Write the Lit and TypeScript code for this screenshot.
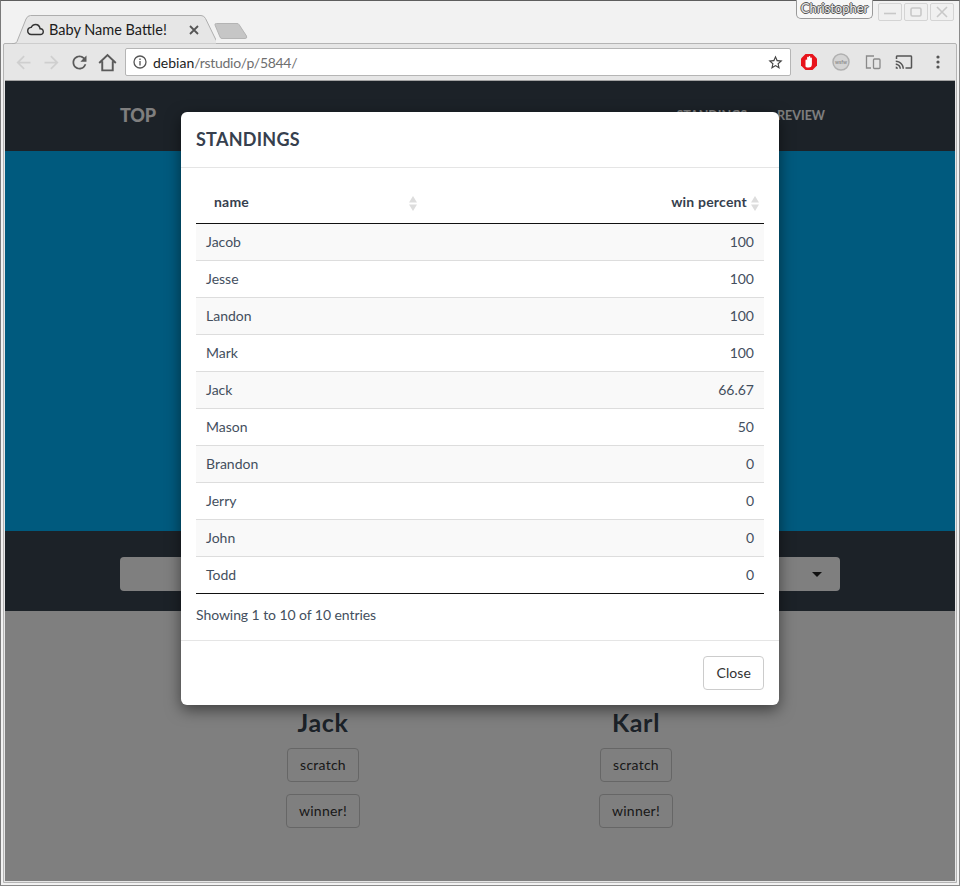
import { LitElement, html, css, svg } from "lit";
import { customElement } from "lit/decorators.js";

const rows: [string, string][] = [
  ["Jacob", "100"], ["Jesse", "100"], ["Landon", "100"], ["Mark", "100"], ["Jack", "66.67"],
  ["Mason", "50"], ["Brandon", "0"], ["Jerry", "0"], ["John", "0"], ["Todd", "0"],
];

const icon = (cls: string, d: string, vb = "0 0 24 24") =>
  html`<svg class=${cls} viewBox=${vb}>${svg`<path d=${d}></path>`}</svg>`;

const ARROW = "M20 11H7.83l5.59-5.59L12 4l-8 8 8 8 1.41-1.41L7.83 13H20v-2z";
const RELOAD = "M17.65 6.35A7.958 7.958 0 0 0 12 4c-4.42 0-7.99 3.58-7.99 8s3.57 8 7.99 8c3.73 0 6.84-2.55 7.73-6h-2.08A5.99 5.99 0 0 1 12 18c-3.31 0-6-2.69-6-6s2.69-6 6-6c1.66 0 3.14.69 4.22 1.78L13 11h7V4l-2.35 2.35z";
const STAR = "M22 9.24l-7.19-.62L12 2 9.19 8.63 2 9.24l5.46 4.73L5.82 21 12 17.27 18.18 21l-1.63-7.03L22 9.24zM12 15.4l-3.76 2.27 1-4.28-3.32-2.88 4.38-.38L12 6.1l1.71 4.04 4.38.38-3.32 2.88 1 4.28L12 15.4z";
const CAST = "M21 3H3c-1.1 0-2 .9-2 2v3h2V5h18v14h-7v2h7c1.1 0 2-.9 2-2V5c0-1.1-.9-2-2-2zM1 18v3h3c0-1.66-1.34-3-3-3zm0-4v2c2.76 0 5 2.24 5 5h2c0-3.87-3.13-7-7-7zm0-4v2c4.97 0 9 4.03 9 9h2c0-6.08-4.93-11-11-11z";
const CLOUD = "M19.35 10.04A7.49 7.49 0 0 0 12 4C9.11 4 6.6 5.64 5.35 8.04A5.994 5.994 0 0 0 0 14c0 3.31 2.69 6 6 6h13c2.76 0 5-2.24 5-5 0-2.64-2.05-4.78-4.65-4.96zM19 18H6c-2.21 0-4-1.79-4-4s1.79-4 4-4h.71C7.37 7.69 9.48 6 12 6c3.04 0 5.5 2.46 5.5 5.5v.5H19c1.66 0 3 1.34 3 3s-1.34 3-3 3z";

const sortIcon = html`<svg class="sort" viewBox="0 0 10 15"><path d="M5 0l4 6.5H1z"></path><path d="M5 15l-4-6.5h8z"></path></svg>`;

@customElement("app-root")
export class AppRoot extends LitElement {
  static styles = css`
    :host { display: block; width: 960px; height: 886px; font-family: "Lato", "Liberation Sans", sans-serif; }
    * { box-sizing: border-box; }
    .window { width: 960px; height: 886px; display: flex; flex-direction: column; background: #f2f2f2;
      border: 1px solid #8a8a8a; border-top-color: #5e5e5e; border-left-color: #7a7a7a; }

    .titlebar { height: 42px; position: relative; display: flex; flex: none; }
    .tab { position: relative; width: 204px; height: 29px; margin: 13px 0 0 11px; display: flex; align-items: center; z-index: 1; flex: none; }
    .tab-shape { position: absolute; left: 0; top: 0; width: 204px; height: 30px; }
    .tab-content { position: relative; display: flex; align-items: center; height: 27px; padding: 2px 0 0 15px; }
    .cloud { width: 17px; height: 17px; fill: #333; }
    .tab-title { margin-left: 5px; font-size: 14.5px; color: #1c1c1c; white-space: nowrap; width: 128px; }
    .tab-x { width: 10px; height: 10px; margin-left: 12px; stroke: #555; stroke-width: 1.8; fill: none; }
    .newtab { width: 36px; height: 18px; margin: 21px 0 0 -3px; flex: none; }
    .win-area { margin-left: auto; display: flex; align-items: flex-start; padding-right: 3px; }
    .user { width: 77px; height: 19px; margin-top: -1px; margin-right: 5px; border: 1px solid #9a9a9a; border-top: none; border-radius: 0 0 5px 5px;
      background: #f7f7f7; font-size: 13px; font-family: "Lato", sans-serif; text-align: center; line-height: 17px; color: #e8e8e8;
      text-shadow: -1px 0 #555, 1px 0 #555, 0 -1px #555, 0 1px #555; }
    .winbtn { width: 24px; height: 18px; margin: 2px 2px 0 0; border: 1px solid #d4d4d4; border-radius: 2px; background: #f0f0f0;
      display: flex; align-items: center; justify-content: center; }
    .winbtn svg { width: 14px; height: 12px; fill: none; stroke: #c8c8c8; stroke-width: 1.6; }

    .frame { flex: 1; margin: 0 2px 2px; padding: 0 1px 1px; border: 1px solid #b4b4b4; border-radius: 2px 2px 0 0; background: #e6e6e6;
      display: flex; flex-direction: column; min-height: 0; }
    .toolbar { height: 37px; flex: none; border-bottom: 1px solid #a4a4a4; display: flex; align-items: center; padding-left: 7.5px; }
    .nav-ico { width: 21px; height: 21px; margin-right: 7px; fill: #5a5a5a; flex: none; }
    .nav-ico.off { fill: #cfcfcf; }
    .flip { transform: scaleX(-1); }
    .home { width: 21px; height: 21px; fill: none; stroke: #5a5a5a; stroke-width: 2.2; flex: none; }
    .omni { width: 666px; height: 28px; margin-left: 7.5px; background: #fff; border: 1px solid #b5b5b5; border-radius: 2px; display: flex; align-items: center; padding: 0 6px 0 7px; flex: none; }
    .info { width: 14px; height: 14px; fill: none; stroke: #555; stroke-width: 1.3; flex: none; }
    .url { margin-left: 6px; font-size: 14px; color: #6f6f6f; flex: 1; white-space: nowrap; letter-spacing: -.3px; }
    .url b { font-weight: 400; color: #1c1c1c; letter-spacing: 0; }
    .star { width: 17px; height: 17px; fill: #444; flex: none; }
    .ext { flex: none; }
    .opera { width: 18px; height: 18px; margin-left: 9px; }
    .wsfw { width: 18px; height: 18px; margin-left: 14px; }
    .device { width: 16px; height: 16px; margin-left: 15px; fill: none; stroke: #8a8a8a; stroke-width: 1.3; }
    .cast { width: 18px; height: 18px; margin-left: 14px; fill: #555; }
    .dots { width: 4px; height: 14px; margin-left: 23px; fill: #555; }

    .page { position: relative; flex: 1; background: #fff; display: flex; flex-direction: column; overflow: hidden; }
    .topnav { height: 70px; flex: none; background: #384450; display: flex; align-items: center; padding: 0 130px 2px 115px; color: #fff; font-weight: 700; }
    .brand { font-size: 18px; font-weight: 900; letter-spacing: -.2px; }
    .links { margin-left: auto; display: flex; gap: 30px; font-size: 12.5px; }
    .hero { height: 380px; flex: none; background: #00b4fc; }
    .selectbar { height: 80px; flex: none; background: #384450; padding: 26px 115px 0; }
    .select { height: 34px; background: #fff; border-radius: 4px; display: flex; align-items: center; justify-content: flex-end; padding-right: 18px; }
    .caret { width: 0; height: 0; border: 5px solid transparent; border-top-color: #222; border-bottom: 0; }
    .battle { flex: 1; display: grid; grid-template-columns: 313px 313px; padding: 98px 0 0 161.5px; }
    .col { display: flex; flex-direction: column; align-items: center; gap: 12px; }
    .col h3 { margin: 0 0 1px; font-size: 25px; line-height: 26px; font-weight: 700; color: #384450; letter-spacing: .7px; }
    .btn { height: 34px; padding: 0 12px; font: 14px/32px "Lato", sans-serif; color: #333; background: #fff; border: 1px solid #ccc; border-radius: 4px; letter-spacing: .25px; }

    .overlay { position: absolute; inset: 0; background: rgba(0, 0, 0, .5); display: flex; justify-content: center; align-items: flex-start; padding-top: 31px; }
    .modal { width: 598px; height: 593px; background: #fff; border-radius: 6px; box-shadow: 0 5px 15px rgba(0, 0, 0, .5); display: flex; flex-direction: column; color: #444f5e; font-size: 14px; }
    .m-head { height: 56px; border-bottom: 1px solid #e5e5e5; padding: 15px 15px 0; flex: none; }
    .m-head h4 { margin: 0; font-size: 18px; line-height: 25px; font-weight: 700; color: #36404e; letter-spacing: .25px; }
    .m-body { padding: 15px 15px 0; height: 472px; flex: none; }
    table { width: 568px; border-collapse: separate; border-spacing: 0; table-layout: fixed; }
    th { position: relative; height: 41px; padding: 0 0 3px; font-size: 14px; font-weight: 700; color: #36404e; border-bottom: 1px solid #111; letter-spacing: .2px; }
    th.l { width: 232px; text-align: left; padding-left: 18px; }
    th.r { text-align: right; padding-right: 17px; }
    .sort { position: absolute; right: 10px; top: 13px; width: 10px; height: 15px; fill: #ddd; }
    th.r .sort { right: 4px; }
    td { height: 37px; padding: 0 10px; line-height: 20px; border-bottom: 1px solid #ddd; }
    td.r { text-align: right; }
    tr.odd td { background: #f9f9f9; }
    tr:last-child td { border-bottom-color: #111; }
    .info-line { margin-top: 11px; line-height: 20px; color: #444f5e; letter-spacing: -.07px; }
    .m-foot { flex: 1; border-top: 1px solid #e5e5e5; padding: 15px; display: flex; justify-content: flex-end; }
    .close { height: 34px; padding: 0 12px; font: 14px/32px "Lato", sans-serif; color: #333; background: #fff; border: 1px solid #ccc; border-radius: 4px; letter-spacing: .1px; }
  `;

  render() {
    return html`
      <div class="window">
        <div class="titlebar">
          <div class="tab">
            <svg class="tab-shape" viewBox="0 0 204 30">
              <path d="M-1 29.5H2q2 0 3-2L14 5q1.500-3.500 4.500-3.500H189q3 0 4.500 3L204 26q1.500 3.500 4 3.500" fill="#e6e6e6" stroke="#aeaeae"></path>
            </svg>
            <div class="tab-content">
              ${icon("cloud", CLOUD)}
              <span class="tab-title">Baby Name Battle!</span>
              <svg class="tab-x" viewBox="0 0 10 10"><path d="M1 1l8 8M9 1l-8 8"></path></svg>
            </div>
          </div>
          <svg class="newtab" viewBox="0 0 36 18"><path d="M3.500 1.500H24q1.500 0 2 1L33.500 14q1 2.500-1.500 2.500H9q-1.500 0-2-1.500L2 3q-.5-1.500 1.500-1.500z" fill="#c6c6c6" stroke="#b4b4b4"></path></svg>
          <div class="win-area">
            <div class="user">Christopher</div>
            <div class="winbtn"><svg viewBox="0 0 14 12"><path d="M1 7.500h12"></path></svg></div>
            <div class="winbtn"><svg viewBox="0 0 14 12"><rect x="2" y="2" width="10" height="8" rx="1.500"></rect></svg></div>
            <div class="winbtn"><svg viewBox="0 0 14 12"><path d="M2 1l10 10M12 1L2 11"></path></svg></div>
          </div>
        </div>
        <div class="frame">
          <div class="toolbar">
            ${icon("nav-ico off", ARROW)}
            ${icon("nav-ico off flip", ARROW)}
            ${icon("nav-ico", RELOAD)}
            <svg class="home" viewBox="0 0 24 24"><path d="M2.500 12.500L12 3.500l9.500 9M6 10.500V21h12V10.500"></path></svg>
            <div class="omni">
              <svg class="info" viewBox="0 0 14 14"><circle cx="7" cy="7" r="6"></circle><path d="M7 6v4.500M7 3.500v1.400"></path></svg>
              <span class="url"><b>debian</b>/rstudio/p/5844/</span>
              ${icon("star", STAR)}
            </div>
            <svg class="ext opera" viewBox="0 0 18 18">
              <path d="M5.500 1h7L17 5.500v7L12.500 17h-7L1 12.500v-7z" fill="#e8141c"></path>
              <path d="M5.500 13.500V7.500q0-1 .8-1t.8 1V4.800q0-1 .8-1t.8 1V3.900q0-1 .8-1t.8 1v1.500q0-1 .8-1t.8 1V11q0 3.500-3.200 3.500h-1.500q-1 0-1.700-1z" fill="#fff"></path>
            </svg>
            <svg class="ext wsfw" viewBox="0 0 18 18">
              <circle cx="9" cy="9" r="8" fill="#d4d4d4" stroke="#b0b0b0" stroke-width="1.500"></circle>
              <text x="9" y="10.500" text-anchor="middle" font-size="5" font-weight="700" fill="#8c8c8c" font-family="Lato">wsfw</text>
            </svg>
            <svg class="ext device" viewBox="0 0 16 16"><path d="M9 2H1.500v12H6"></path><rect x="8.500" y="5" width="6.500" height="9.500" rx="1"></rect></svg>
            ${icon("ext cast", CAST)}
            <svg class="ext dots" viewBox="0 0 4 14"><circle cx="2" cy="2" r="1.600"></circle><circle cx="2" cy="7" r="1.600"></circle><circle cx="2" cy="12" r="1.600"></circle></svg>
          </div>
          <div class="page">
            <div class="topnav">
              <span class="brand">TOP</span>
              <div class="links"><span>STANDINGS</span><span>REVIEW</span></div>
            </div>
            <div class="hero"></div>
            <div class="selectbar"><div class="select"><span class="caret"></span></div></div>
            <div class="battle">
              <div class="col"><h3>Jack</h3><button class="btn">scratch</button><button class="btn">winner!</button></div>
              <div class="col"><h3>Karl</h3><button class="btn">scratch</button><button class="btn">winner!</button></div>
            </div>
            <div class="overlay">
              <div class="modal">
                <div class="m-head"><h4>STANDINGS</h4></div>
                <div class="m-body">
                  <table>
                    <thead><tr><th class="l">name${sortIcon}</th><th class="r">win percent${sortIcon}</th></tr></thead>
                    <tbody>
                      ${rows.map(([n, v], i) => html`<tr class=${i % 2 === 0 ? "odd" : ""}><td>${n}</td><td class="r">${v}</td></tr>`)}
                    </tbody>
                  </table>
                  <div class="info-line">Showing 1 to 10 of 10 entries</div>
                </div>
                <div class="m-foot"><button class="close">Close</button></div>
              </div>
            </div>
          </div>
        </div>
      </div>
    `;
  }
}
